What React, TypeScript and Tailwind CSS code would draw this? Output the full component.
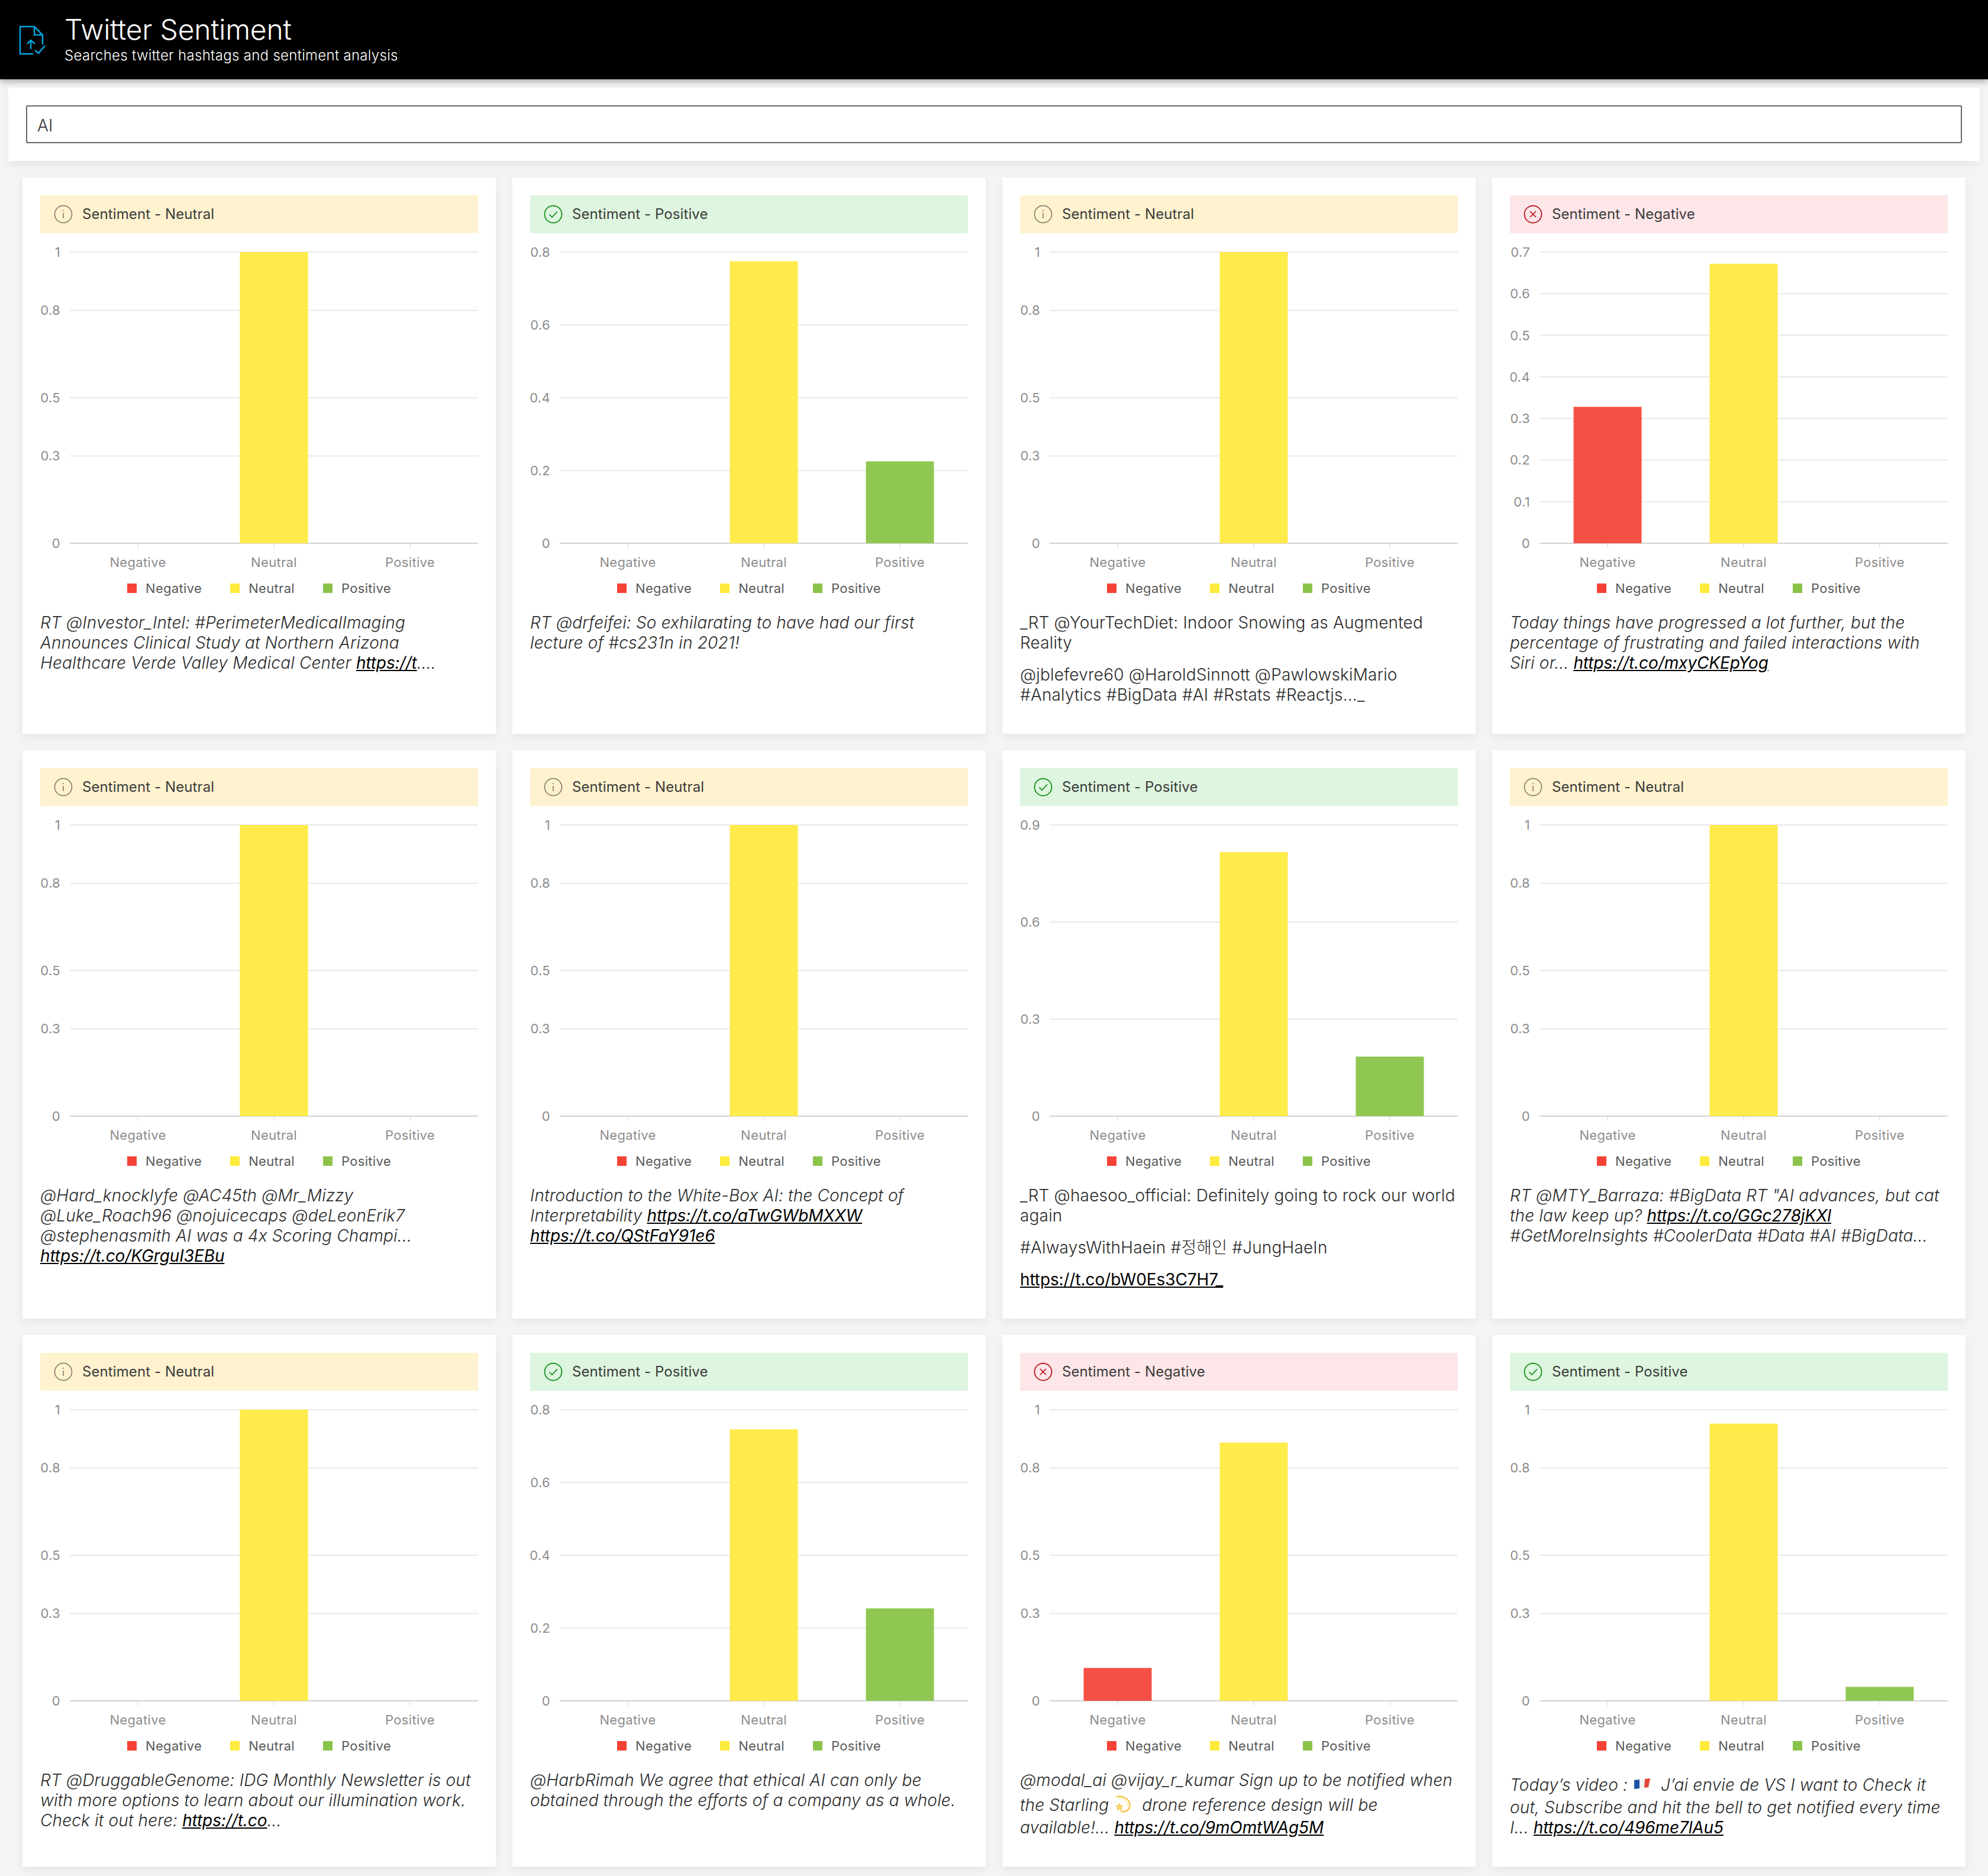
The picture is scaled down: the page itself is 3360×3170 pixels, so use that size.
import React from 'react'

const AXIS_CATEGORIES = ['Negative', 'Neutral', 'Positive']

type Sentiment = 'Neutral' | 'Positive' | 'Negative'

type Tweet = {
  sentiment: Sentiment
  domain: number
  ticks: number[]
  values: [number, number, number]
  body: React.ReactNode
}

const FILLS = ['#f55045', '#ffeb4a', '#90c752']

const T_FULL = [0, 0.3, 0.5, 0.8, 1]

function Link({ children }: { children: React.ReactNode }) {
  return <a className="font-normal tracking-[-0.1px] text-black underline">{children}</a>
}

function Flag() {
  return (
    <svg viewBox="0 0 40 46" className="inline-block h-[46px] w-10 align-[-11px]">
      <path d="M3 17 L12 16 L12 31 L3 32 Z" fill="#1c55a6" />
      <path d="M12 16 L21 15 L20 30 L12 31 Z" fill="#f4f4f4" />
      <path d="M21 15 L30 14 L27 29 L20 30 Z" fill="#e0463a" />
    </svg>
  )
}

function Dizzy() {
  return (
    <svg viewBox="0 0 40 46" className="inline-block h-[46px] w-10 align-[-11px]" fill="none">
      <path d="M6 11 C18 8 30 18 27 29 C25 35 18 37 13 36" stroke="#f7c64a" strokeWidth="2.5" strokeLinecap="round" />
      <path d="M10 13.5 C18 13.5 24 20 23.5 27" stroke="#fdeec0" strokeWidth="2" strokeLinecap="round" />
      <path d="M10 22 L11.8 26 L16 26.5 L13 29.5 L14 34 L10 31.8 L6 34 L7 29.5 L4 26.5 L8.2 26 Z" fill="#fbd664" stroke="#efb63c" strokeWidth="0.75" />
    </svg>
  )
}

const TWEETS: Tweet[] = [
  {
    sentiment: 'Neutral', domain: 1, ticks: T_FULL, values: [0, 1, 0],
    body: <p className="mb-5 italic">RT @Investor_Intel: #PerimeterMedicalImaging Announces Clinical Study at Northern Arizona Healthcare Verde Valley Medical Center <Link>https://t</Link>....</p>,
  },
  {
    sentiment: 'Positive', domain: 0.8, ticks: [0, 0.2, 0.4, 0.6, 0.8], values: [0, 0.775, 0.225],
    body: <p className="mb-5 italic">RT @drfeifei: So exhilarating to have had our first lecture of #cs231n in 2021!</p>,
  },
  {
    sentiment: 'Neutral', domain: 1, ticks: T_FULL, values: [0, 1, 0],
    body: (
      <>
        <p className="mb-5">_RT @YourTechDiet: Indoor Snowing as Augmented Reality</p>
        <p className="mb-5">@jblefevre60 @HaroldSinnott @PawlowskiMario #Analytics #BigData #AI #Rstats #Reactjs..._</p>
      </>
    ),
  },
  {
    sentiment: 'Negative', domain: 0.7, ticks: [0, 0.1, 0.2, 0.3, 0.4, 0.5, 0.6, 0.7], values: [0.328, 0.672, 0],
    body: <p className="mb-5 italic">Today things have progressed a lot further, but the percentage of frustrating and failed interactions with Siri or... <Link>https://t.co/mxyCKEpYog</Link></p>,
  },
  {
    sentiment: 'Neutral', domain: 1, ticks: T_FULL, values: [0, 1, 0],
    body: <p className="mb-5 italic">@Hard_knocklyfe @AC45th @Mr_Mizzy @Luke_Roach96 @nojuicecaps @deLeonErik7 @stephenasmith AI was a 4x Scoring Champi... <Link>https://t.co/KGrguI3EBu</Link></p>,
  },
  {
    sentiment: 'Neutral', domain: 1, ticks: T_FULL, values: [0, 1, 0],
    body: <p className="mb-5 italic">Introduction to the White-Box AI: the Concept of Interpretability <Link>https://t.co/aTwGWbMXXW</Link> <Link>https://t.co/QStFaY91e6</Link></p>,
  },
  {
    sentiment: 'Positive', domain: 0.9, ticks: [0, 0.3, 0.6, 0.9], values: [0, 0.816, 0.184],
    body: (
      <>
        <p className="mb-5">_RT @haesoo_official: Definitely going to rock our world again</p>
        <p className="mb-5">#AlwaysWithHaein #정해인 #JungHaeIn</p>
        <p className="mb-5"><Link>https://t.co/bW0Es3C7H7_</Link></p>
      </>
    ),
  },
  {
    sentiment: 'Neutral', domain: 1, ticks: T_FULL, values: [0, 1, 0],
    body: <p className="mb-5 italic">RT @MTY_Barraza: #BigData RT "AI advances, but cat the law keep up? <Link>https://t.co/GGc278jKXl</Link> #GetMoreInsights #CoolerData #Data #AI #BigData...</p>,
  },
  {
    sentiment: 'Neutral', domain: 1, ticks: T_FULL, values: [0, 1, 0],
    body: <p className="mb-5 italic">RT @DruggableGenome: IDG Monthly Newsletter is out with more options to learn about our illumination work. Check it out here: <Link>https://t.co</Link>...</p>,
  },
  {
    sentiment: 'Positive', domain: 0.8, ticks: [0, 0.2, 0.4, 0.6, 0.8], values: [0, 0.746, 0.254],
    body: <p className="mb-5 italic">@HarbRimah We agree that ethical AI can only be obtained through the efforts of a company as a whole.</p>,
  },
  {
    sentiment: 'Negative', domain: 1, ticks: T_FULL, values: [0.113, 0.887, 0],
    body: <p className="mb-5 italic">@modal_ai @vijay_r_kumar Sign up to be notified when the Starling <Dizzy /> drone reference design will be available!... <Link>https://t.co/9mOmtWAg5M</Link></p>,
  },
  {
    sentiment: 'Positive', domain: 1, ticks: T_FULL, values: [0, 0.952, 0.048],
    body: <p className="mb-5 italic">Today’s video : <Flag /> J’ai envie de VS I want to Check it out, Subscribe and hit the bell to get notified every time I... <Link>https://t.co/496me7lAu5</Link></p>,
  },
]

function StatusIcon({ sentiment }: { sentiment: Sentiment }) {
  if (sentiment === 'Neutral') {
    return (
      <svg viewBox="0 0 32 32" className="h-8 w-8 shrink-0" fill="none" stroke="#7a7464" strokeWidth="1.5">
        <circle cx="16" cy="16" r="14.5" />
        <path d="M16 14v9M16 9v2" />
      </svg>
    )
  }
  if (sentiment === 'Positive') {
    return (
      <svg viewBox="0 0 32 32" className="h-8 w-8 shrink-0" fill="none" stroke="#0e8a16" strokeWidth="1.75">
        <circle cx="16" cy="16" r="14.5" />
        <path d="M9.5 16.5l4.5 4.5 9-9.5" />
      </svg>
    )
  }
  return (
    <svg viewBox="0 0 32 32" className="h-8 w-8 shrink-0" fill="none" stroke="#b50f17" strokeWidth="1.75">
      <circle cx="16" cy="16" r="14.5" />
      <path d="M11 11l10 10M21 11L11 21" />
    </svg>
  )
}

const BANNERS: Record<Sentiment, string> = {
  Neutral: 'bg-[#fff2cf]',
  Positive: 'bg-[#def5df]',
  Negative: 'bg-[#fde6e8]',
}

function Chart({ domain, ticks, values }: Pick<Tweet, 'domain' | 'ticks' | 'values'>) {
  const top = 32
  const base = 524
  const y = (v: number) => base - (v / domain) * (base - top)
  return (
    <svg viewBox="0 0 740 584" className="block h-[584px] w-[740px] tracking-[0.32px]">
      {ticks.map((t) => (
        <g key={t}>
          <line x1="50" x2="740" y1={y(t)} y2={y(t)} stroke={t === 0 ? '#d2d2d2' : '#e9e9e9'} strokeWidth="2" />
          <text x="34" y={y(t) + 8} textAnchor="end" fontSize="22" fill="#8c8c8c">{t}</text>
        </g>
      ))}
      {AXIS_CATEGORIES.map((c, i) => {
        const cx = 165 + i * 230
        return (
          <g key={c}>
            {values[i] > 0 && <rect x={cx - 57.5} y={y(values[i])} width="115" height={base - y(values[i])} fill={FILLS[i]} />}
            <line x1={cx} x2={cx} y1={base} y2={base + 8} stroke="#d2d2d2" strokeWidth="1" />
            <text x={cx} y={564} textAnchor="middle" fontSize="22" fill="#8c8c8c">{c}</text>
          </g>
        )
      })}
    </svg>
  )
}

function Legend() {
  return (
    <div className="flex h-8 items-center justify-center gap-12 text-[22px] tracking-[0.32px] text-[#595959]">
      {AXIS_CATEGORIES.map((c, i) => (
        <div key={c} className="flex items-center gap-[15px]">
          <span className={`h-4 w-4 ${i === 0 ? 'bg-[#f44336]' : i === 1 ? 'bg-[#ffeb3b]' : 'bg-[#8bc34a]'}`} />
          {c}
        </div>
      ))}
    </div>
  )
}

function TweetCard({ tweet }: { tweet: Tweet }) {
  return (
    <article className="bg-white px-[30px] pt-[30px] pb-[29px] shadow-[0_6px_14px_rgba(0,0,0,0.06)]">
      <div className={`flex h-16 items-center gap-[16px] pl-[23px] text-[24px] tracking-[0.1px] text-[#3a3a3a] ${BANNERS[tweet.sentiment]}`}>
        <StatusIcon sentiment={tweet.sentiment} />
        <span>Sentiment - {tweet.sentiment}</span>
      </div>
      <Chart domain={tweet.domain} ticks={tweet.ticks} values={tweet.values} />
      <Legend />
      <div className="mt-[25px] text-[28px] leading-[34px] font-light tracking-[0.17px] text-[#2b2b2b]">{tweet.body}</div>
    </article>
  )
}

export default function App() {
  return (
    <div className="h-[3170px] overflow-hidden bg-[#f4f4f4] font-['Inter','Noto_Sans_CJK_KR',sans-serif]">
      <header className="flex h-[134px] items-center gap-[19px] bg-black pl-5 text-white shadow-[0_4px_10px_rgba(0,0,0,0.3)]">
        <svg viewBox="0 2 70 70" className="h-[70px] w-[70px] shrink-0" fill="none" stroke="#00a5e0" strokeWidth="2.5">
          <path d="M36 61H14V15H38L52 29V45M38 15V29H52" />
          <path d="M32 53V38M26 44L32 38L39 44" />
          <path d="M39 55L45 60L56 47" />
        </svg>
        <div className="pb-1">
          <h1 className="text-[48px] leading-[58px] font-light tracking-[-0.25px]">Twitter Sentiment</h1>
          <p className="text-[24px] leading-[30px] font-light tracking-[0.3px]">Searches twitter hashtags and sentiment analysis</p>
        </div>
      </header>
      <div className="mx-[14px] mt-[14px] bg-white p-[30px] shadow-[0_6px_14px_rgba(0,0,0,0.06)]">
        <input
          defaultValue="AI"
          className="h-16 w-full rounded-[2px] border-2 border-[#666] pt-1 pl-[17px] text-[28px] font-light tracking-[0.17px] text-[#333] outline-none"
        />
      </div>
      <main className="grid grid-cols-4 gap-7 px-[38px] pt-7">
        {TWEETS.map((tweet, i) => (
          <TweetCard key={i} tweet={tweet} />
        ))}
      </main>
    </div>
  )
}
